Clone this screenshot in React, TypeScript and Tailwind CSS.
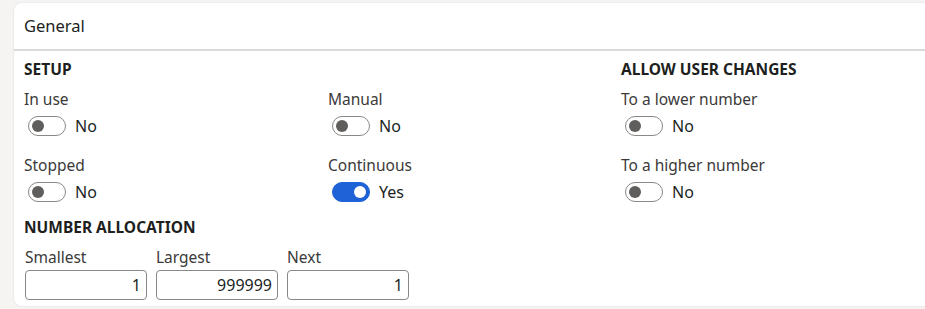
import React from "react";

const FONT = { fontFamily: '"Segoe UI", "Noto Sans", "Open Sans", sans-serif' };

function Toggle({ on }: { on: boolean }) {
  return (
    <div className="flex items-center h-[20px] pl-[4px]">
      <span
        className={`inline-flex items-center w-[38px] h-[20px] rounded-full border ${
          on ? "bg-[#1f62d8] border-[#1f62d8] justify-end" : "bg-white border-[#8a8886] justify-start"
        }`}
      >
        <span
          className={`w-[12px] h-[12px] rounded-full ${on ? "bg-white mr-[3px]" : "bg-[#605e5c] ml-[3px]"}`}
        />
      </span>
      <span className="ml-[9px] text-[16px] text-[#201f1e] leading-none">{on ? "Yes" : "No"}</span>
    </div>
  );
}

function Field({ label, on }: { label: string; on: boolean }) {
  return (
    <div className="flex flex-col">
      <div className="h-[20px] leading-[20px] text-[15.5px] text-[#3b3a39]">{label}</div>
      <div className="mt-[7px]">
        <Toggle on={on} />
      </div>
    </div>
  );
}

function NumberBox({ label, value }: { label: string; value: string }) {
  return (
    <div className="flex flex-col">
      <div className="h-[20px] leading-[20px] text-[15.5px] text-[#3b3a39]">{label}</div>
      <div className="mt-[3px] w-[122px] h-[30px] rounded-[4px] border border-[#8a8886] flex items-center justify-end pr-[5px] text-[16px] text-[#201f1e]">
        {value}
      </div>
    </div>
  );
}

export default function App() {
  return (
    <div className="w-[925px] h-[309px] overflow-hidden bg-[#f6f4f3]" style={FONT}>
      <div className="ml-[14px] mt-[3px] w-[930px] h-[303px] bg-white rounded-[8px] shadow-[0_0_2px_rgba(0,0,0,0.12)]">
        <div className="h-[48px] flex items-center pl-[10px] border-b-2 border-[#d9d9d9]">
          <span className="text-[16.5px] text-[#201f1e]">General</span>
        </div>
        <div className="pl-[10px] pt-[8px]">
          <div className="grid grid-cols-[304px_293px_1fr] gap-y-[19px]">
            <div className="h-[20px] leading-[20px] text-[15.5px] font-bold text-[#201f1e] -mb-[9px]">SETUP</div>
            <div className="-mb-[9px]" />
            <div className="h-[20px] leading-[20px] text-[15.5px] font-bold text-[#201f1e] -mb-[9px]">ALLOW USER CHANGES</div>
            <Field label="In use" on={false} />
            <Field label="Manual" on={false} />
            <Field label="To a lower number" on={false} />
            <Field label="Stopped" on={false} />
            <Field label="Continuous" on={true} />
            <Field label="To a higher number" on={false} />
          </div>
          <div className="mt-[15px] h-[20px] leading-[20px] text-[15.5px] font-bold text-[#201f1e]">NUMBER ALLOCATION</div>
          <div className="mt-[10px] flex gap-[9px] ml-[1px]">
            <NumberBox label="Smallest" value="1" />
            <NumberBox label="Largest" value="999999" />
            <NumberBox label="Next" value="1" />
          </div>
        </div>
      </div>
    </div>
  );
}
